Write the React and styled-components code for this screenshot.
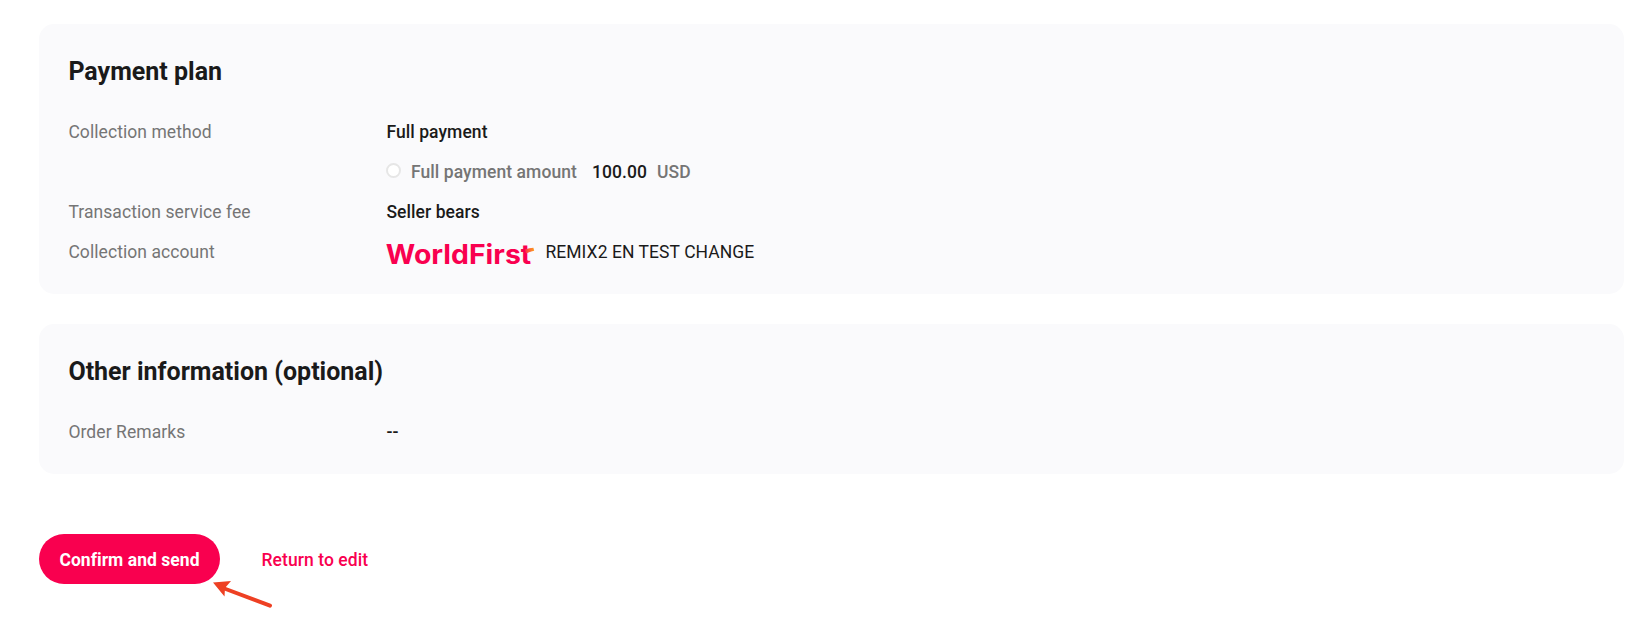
import React from 'react'
import styled, { createGlobalStyle } from 'styled-components'

const GlobalStyle = createGlobalStyle`
  body {
    margin: 0;
    background: #fff;
    color: #1a1a1a;
    font-family: Roboto, 'Liberation Sans', sans-serif;
    font-size: 17.5px;
    letter-spacing: 0.07px;
  }
`

const Page = styled.main`
  box-sizing: border-box;
  height: 621px;
  padding: 24px 17px 0 39px;
  overflow: hidden;
`

const Card = styled.section`
  margin-bottom: 30px;
  padding: 29px 30px 22px 29.4px;
  border-radius: 15px;
  background: #fafafc;
`

const Title = styled.h2`
  margin: 0 0 21px;
  font-size: 25px;
  font-weight: 700;
  line-height: 38px;
  letter-spacing: 0;
`

const Row = styled.div`
  display: grid;
  grid-template-columns: 318px 1fr;
  height: 40px;
  line-height: 40px;
`

const Label = styled.div`
  color: #757575;
`

const Value = styled.div`
  display: flex;
  align-items: center;
  font-weight: ${props => (props.$regular ? 400 : 500)};
`

const Dot = styled.span`
  box-sizing: border-box;
  width: 15px;
  height: 15px;
  margin: 0 10px 3px -0.4px;
  border: 2px solid #e6e6e6;
  border-radius: 50%;
  background: #fff;
`

const Muted = styled.span`
  color: #757575;
`

const Amount = styled.span`
  margin: 0 10px 0 15px;
`

const Logo = styled.svg`
  display: block;
  flex: none;
  width: 151px;
  height: 40px;
  margin-right: 8px;
  overflow: visible;

  text {
    font-family: Inter, sans-serif;
    font-size: 26.5px;
    font-weight: 700;
    letter-spacing: 0;
    fill: #f9004f;
  }
`

const Actions = styled.div`
  display: flex;
  align-items: center;
  margin-top: 60px;
`

const Confirm = styled.button`
  position: relative;
  width: 181px;
  height: 50px;
  padding: 2px 0 0;
  border: 0;
  border-radius: 25px;
  background: #f9004f;
  color: #fff;
  font: 700 17.5px/48px Roboto, sans-serif;
  letter-spacing: 0.05px;
`

const Arrow = styled.svg`
  position: absolute;
  top: 44px;
  left: 170px;
  width: 64px;
  height: 34px;
`

const Return = styled.a`
  margin-left: 41.5px;
  padding-top: 1px;
  color: #f9004f;
  font-weight: 500;
`

const WorldFirst = () => (
  <Logo viewBox="0 0 151 40" aria-label="WorldFirst">
    <defs>
      <linearGradient id="flag" x1="0" x2="1">
        <stop offset="0" stopColor="#f9304a" />
        <stop offset="0.5" stopColor="#fb6b35" />
        <stop offset="1" stopColor="#ff9f1c" />
      </linearGradient>
    </defs>
    <text x="-0.2" y="32" textLength="145.4" lengthAdjust="spacingAndGlyphs">
      WorldFirst
    </text>
    <path d="M139 17.6 Q143.5 15.8 147.4 15.8 L148.2 18.8 Q144.5 19.4 140 21.6 Z" fill="url(#flag)" />
  </Logo>
)

const App = () => (
  <>
    <GlobalStyle />
    <Page>
      <Card>
        <Title>Payment plan</Title>
        <Row>
          <Label>Collection method</Label>
          <Value>Full payment</Value>
        </Row>
        <Row>
          <Label />
          <Value>
            <Dot />
            <Muted>Full payment amount</Muted>
            <Amount>100.00</Amount>
            <Muted>USD</Muted>
          </Value>
        </Row>
        <Row>
          <Label>Transaction service fee</Label>
          <Value>Seller bears</Value>
        </Row>
        <Row>
          <Label>Collection account</Label>
          <Value $regular>
            <WorldFirst />
            REMIX2 EN TEST CHANGE
          </Value>
        </Row>
      </Card>
      <Card>
        <Title>Other information (optional)</Title>
        <Row>
          <Label>Order Remarks</Label>
          <Value>--</Value>
        </Row>
      </Card>
      <Actions>
        <Confirm>
          Confirm and send
          <Arrow viewBox="0 0 64 34">
            <path
              d="M14 10 L61 27.6"
              stroke="#ee4023"
              strokeWidth="4"
              strokeLinecap="round"
            />
            <path d="M4 4.5 L22 3 L16 10 L15.5 18.5 Z" fill="#ee4023" />
          </Arrow>
        </Confirm>
        <Return>Return to edit</Return>
      </Actions>
    </Page>
  </>
)

export default App
